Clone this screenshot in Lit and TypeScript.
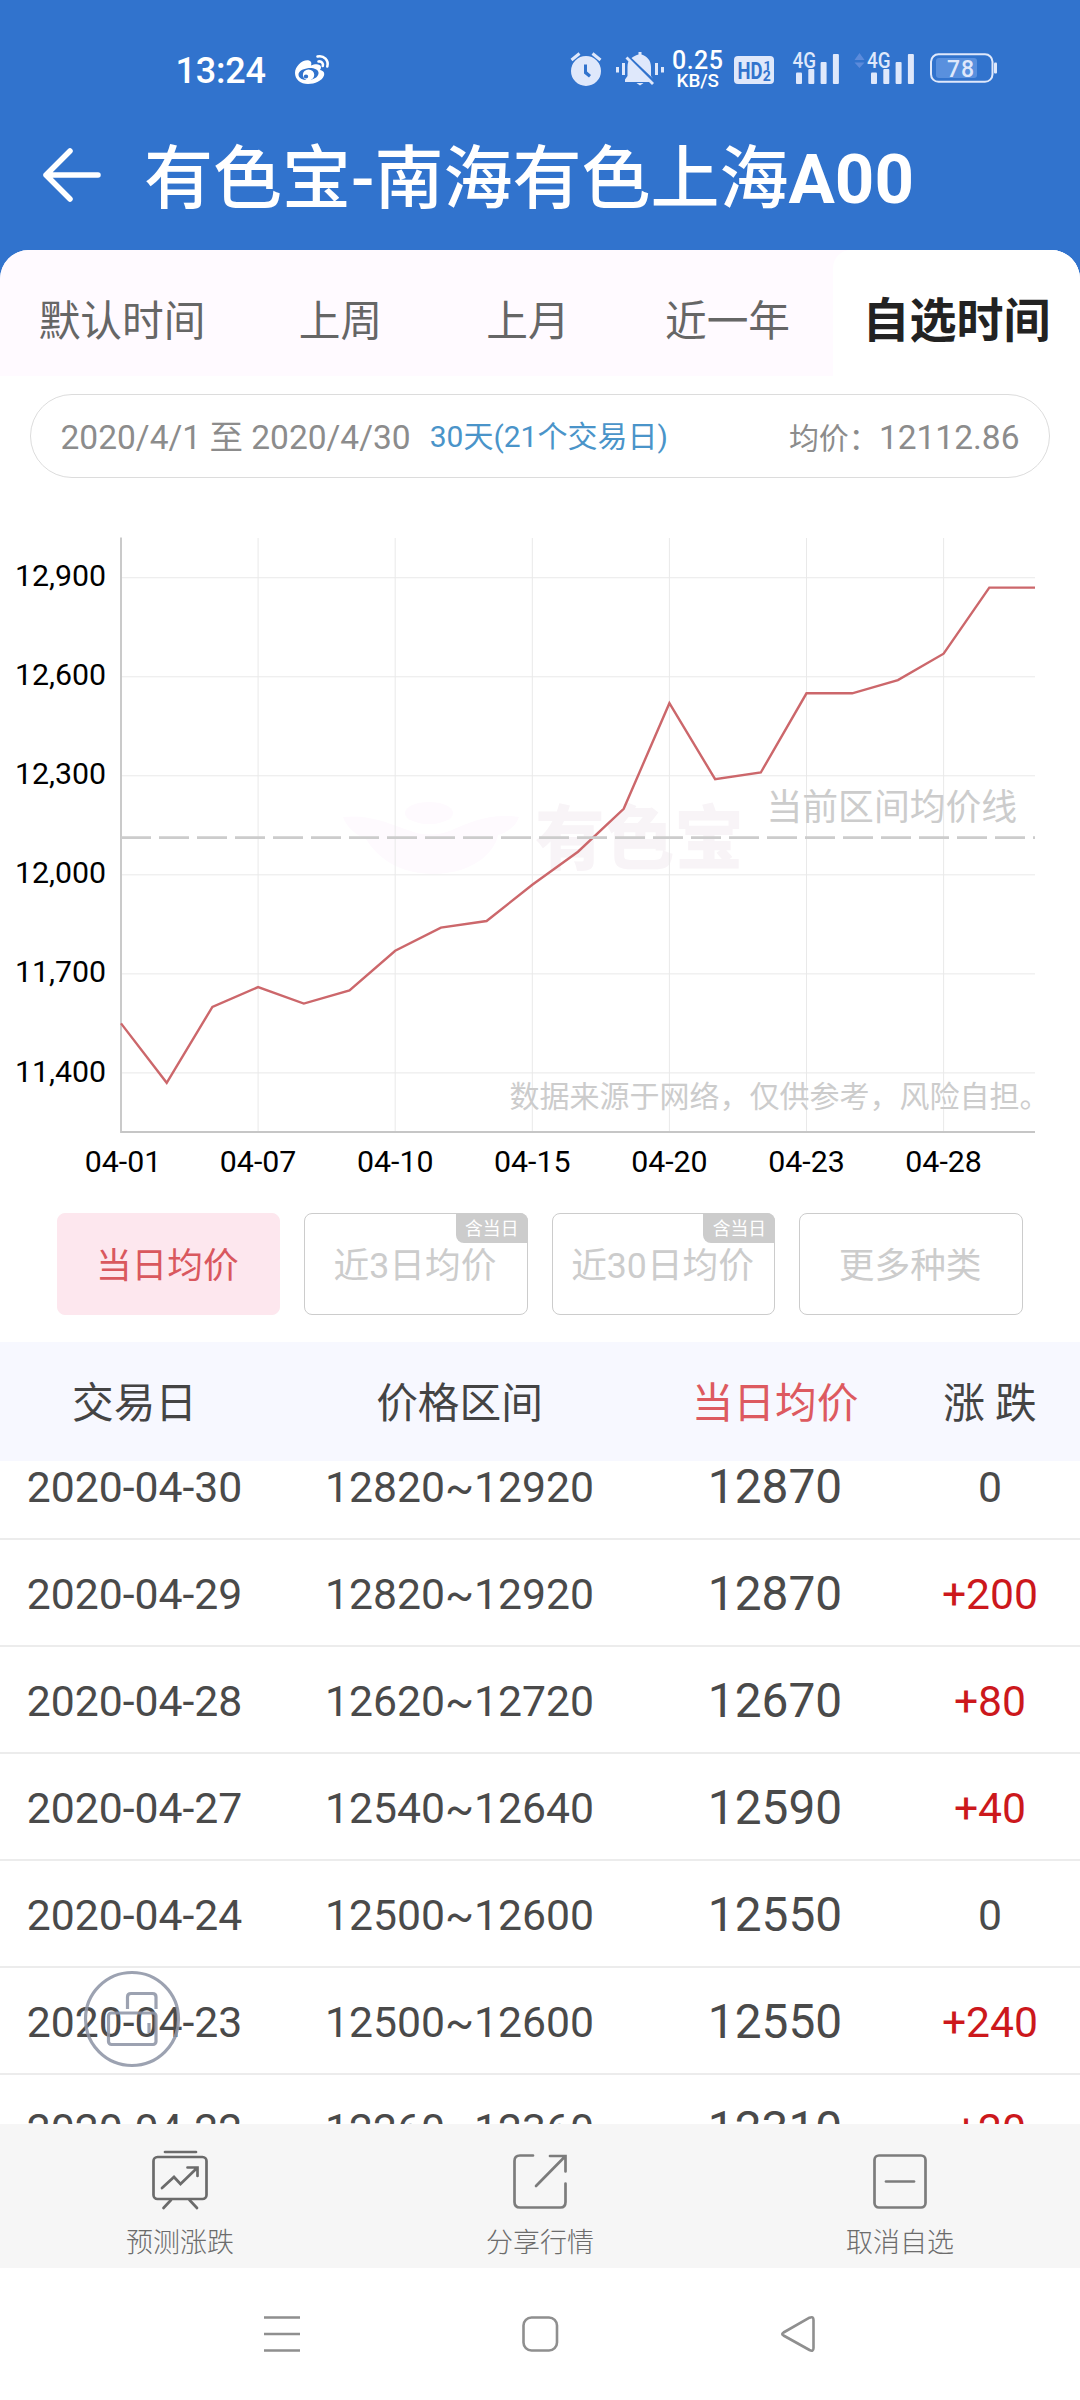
import { LitElement, html, svg, css } from "lit";
import { customElement } from "lit/decorators.js";
import { classMap } from "lit/directives/class-map.js";

const FONT = css`Roboto, "Noto Sans CJK SC", sans-serif`;

@customElement("status-bar")
class StatusBar extends LitElement {
  static styles = css`
    :host { display: flex; height: 100px; align-items: flex-start; color: #fff; font-family: ${FONT}; }
    svg { display: block; width: 1080px; height: 100px; }
    .time { font-size: 36px; font-weight: 500; }
    .tiny { font-weight: 500; }
    .hd { font-weight: 700; fill: #3173cd; }
    .soft { fill: #dfe8fb; }
    .line { fill: none; stroke: #dfe8fb; }
  `;
  bars(x: number) {
    return [72.5, 69, 62, 54].map((y, i) => svg`<rect class="soft" x=${x + i * 12.3} y=${y} width="6" height=${84 - y} rx="1"/>`);
  }
  render() {
    return html`<svg viewBox="0 0 1080 100" fill="#fff">
      <text class="time" x="175.500" y="82.500" textLength="90.500">13:24</text>
      <path fill-rule="evenodd" d="M295 73C295 66 303 59 309 60.500C312 61.500 311.500 64 311 65.500C315 63.500 320.500 63.500 321 67C321 68.500 320.500 69 320 70C323 70.500 325 72.500 324 75.500C322 81 315 84 308 84C300.500 84 295 79.500 295 73ZM298.500 74.500C298.500 78.500 303.500 80.500 309 80C315 79.500 319 76 318.500 72.500C318 69 313 67.500 307.500 68.200C302 69 298.500 71.500 298.500 74.500Z"/>
      <path fill-rule="evenodd" d="M308.500 69.500A5.700 5.400 0 1 0 308.600 80.300A5.700 5.400 0 1 0 308.500 69.500ZM306 74.500A2.200 2 0 1 1 306 78.500A2.200 2 0 1 1 306 74.500Z"/>
      <path fill="none" stroke="#fff" stroke-width="2.600" stroke-linecap="round" d="M317.500 56.500C324 55 329 60.500 327.300 66.500M318.500 61.500C321.500 61 323.600 63.300 322.800 66"/>

      <path class="soft" fill-rule="evenodd" d="M586 56A15 15 0 1 0 586 86A15 15 0 1 0 586 56ZM584 64.500H587V71.500L591 75L589 77.500L584 73.500Z"/>
      <path class="line" stroke-width="3" d="M571.500 60L579.500 53.500M600.500 60L592.500 53.500"/>

      <path class="soft" d="M625 82V79.500L627.500 76V67C627.500 63 628.500 61 630 59.500L650 82ZM631.500 58C634 56 636.500 55 638.500 54.500V52H641.500V54.500C647 56 651 60.500 651 67V76L653 78.500ZM636.500 83H643.500L640 85.500Z"/>
      <path class="line" stroke-width="2.800" d="M626.500 57.500L653 84"/>
      <path class="line" stroke-width="3" d="M617.500 67V72.500M623.500 63V75M656.500 63V75M662.500 67V72.500"/>

      <text class="tiny" font-size="25" x="672" y="68.500" textLength="51">0.25</text>
      <text class="tiny" font-size="18.500" x="676.500" y="87.300" textLength="42.500" lengthAdjust="spacingAndGlyphs">KB/S</text>

      <rect class="soft" x="734" y="56" width="40" height="28" rx="4"/>
      <text class="hd" font-size="23" x="737.500" y="78.500" textLength="25" lengthAdjust="spacingAndGlyphs">HD</text>
      <text class="hd" font-size="13.500" x="763.500" y="69.500">1</text>
      <text class="hd" font-size="14" x="762.800" y="81">2</text>

      <text class="tiny soft" font-size="22.500" x="792.500" y="68" textLength="23.500" lengthAdjust="spacingAndGlyphs">4G</text>
      ${this.bars(796)}
      <path fill="#5c8bdb" d="M854.500 60L859.500 53L864.500 60ZM854.500 62.500H864.500L859.500 68Z"/>
      <text class="tiny soft" font-size="22.500" x="867" y="68" textLength="23.500" lengthAdjust="spacingAndGlyphs">4G</text>
      ${this.bars(871)}

      <rect x="931" y="54.300" width="61.500" height="27.500" rx="7.500" fill="none" stroke="#dfe8fb" stroke-width="2"/>
      <rect x="936" y="58" width="41" height="20" rx="3" fill="#5990de"/>
      <rect class="soft" x="994" y="62.500" width="3" height="11" rx="1"/>
      <text class="tiny soft" font-size="23" x="947" y="76.500" textLength="27">78</text>
    </svg>`;
  }
}

@customElement("title-bar")
class TitleBar extends LitElement {
  static styles = css`
    :host { display: flex; align-items: center; height: 150px; box-sizing: border-box; padding: 9px 0 0 41px; gap: 41px; color: #fff; font-family: ${FONT}; }
    svg { width: 62px; height: 60px; margin-top: -9px; }
    h1 { margin: 0; font-size: 69px; line-height: 100px; font-weight: 500; white-space: nowrap; }
    .latin { font-weight: 700; }
  `;
  render() {
    return html`
      <svg viewBox="0 0 62 60" fill="none" stroke="#fff" stroke-width="5.500" stroke-linecap="round" stroke-linejoin="round"><path d="M29 6L5 30L29 54M5 30H57"/></svg>
      <h1>有色宝-南海有色上海<span class="latin">A00</span></h1>`;
  }
}

const TABS = ["默认时间", "上周", "上月", "近一年", "自选时间"];

@customElement("range-tabs")
class RangeTabs extends LitElement {
  static styles = css`
    :host { display: grid; grid-template-columns: 244px 193px 182px 214px 247px; height: 126px; background: linear-gradient(90deg, #fffaff 85%, #fff 85%); font-family: ${FONT}; }
    .tab { display: flex; align-items: center; justify-content: center; box-sizing: border-box; padding-top: 18px; height: 126px; font-size: 41.700px; line-height: 60px; color: #666; white-space: nowrap; }
    .tab:nth-child(4) { padding-left: 3px; }
    .on { background: #fff; border-top-left-radius: 18px; font-size: 47px; font-weight: 700; color: #222; padding-top: 16px; }
  `;
  render() {
    return TABS.map((t, i) => html`<div class=${classMap({ tab: true, on: i === 4 })}>${t}</div>`);
  }
}

@customElement("range-summary")
class RangeSummary extends LitElement {
  static styles = css`
    :host { display: flex; align-items: baseline; margin: 18px 30px 0; height: 84px; line-height: 85px; box-sizing: border-box; border: 1px solid #dcdcdc; border-radius: 42px; padding: 0 29.500px; font-family: ${FONT}; font-size: 33.500px; color: #8c8c8c; white-space: nowrap; }
    .days { margin-left: 19px; font-size: 30px; color: #4a94c9; position: relative; top: -2px; }
    .avg { margin-left: auto; }
    .label { font-size: 30px; }
  `;
  render() {
    return html`<span>2020/4/1 至 2020/4/30</span><span class="days">30天(21个交易日)</span>
      <span class="avg"><span class="label">均价：</span>12112.86</span>`;
  }
}

const PRICES = [11550, 11370, 11600, 11660, 11610, 11650, 11770, 11840, 11860, 11970, 12070, 12200, 12520, 12290, 12310, 12550, 12550, 12590, 12670, 12870, 12870];
const X_LABELS = ["04-01", "04-07", "04-10", "04-15", "04-20", "04-23", "04-28"];
const Y_LABELS = [12900, 12600, 12300, 12000, 11700, 11400];
const AVERAGE = 12112.86;
const px = (i: number) => 121 + i * 45.7;
const py = (v: number) => 582.9 - (v - 11400) * 0.3301;

@customElement("price-chart")
class PriceChart extends LitElement {
  static styles = css`
    :host { display: block; height: 710px; margin-top: 12px; font-family: ${FONT}; }
    svg { display: block; width: 1080px; height: 710px; }
    .axis { font-size: 30.300px; fill: #000; }
    .grid { stroke: #e9e9e9; stroke-width: 1; }
    .mark { font-size: 70px; font-weight: 900; fill: #f8f4f7; }
    .note { fill: #ccc; }
  `;
  render() {
    return html`<svg viewBox="0 0 1080 710">
      <g fill="#fefafe">
        <ellipse cx="429" cy="323" rx="24" ry="11"/>
        <path d="M343 327C370 324 390 334 408 340C422 346 438 346 452 340C470 332 490 323 519 327C516 336 508 342 498 345C496 358 478 384 432 384C392 383 374 362 366 349C354 344 346 336 343 327Z"/>
      </g>
      <text class="mark" x="535" y="374" textLength="209" lengthAdjust="spacingAndGlyphs">有色宝</text>
      ${Y_LABELS.map((v) => svg`<line class="grid" x1="121" x2="1035" y1=${py(v)} y2=${py(v)}/>
        <text class="axis" x="106" y=${py(v) + 8.6} text-anchor="end">${v.toLocaleString("en-US")}</text>`)}
      ${X_LABELS.map((t, i) => svg`<line class="grid" x1=${px(i * 3)} x2=${px(i * 3)} y1="48" y2="642"/>
        <text class="axis" x=${px(i * 3) + (i ? 0 : 2)} y="682" text-anchor="middle">${t}</text>`)}
      <path d="M121 47.500V642H1035" fill="none" stroke="#c6c6c6" stroke-width="1.800"/>
      <polyline fill="none" stroke="#cc676b" stroke-width="2.400" points=${PRICES.map((v, i) => `${px(i)},${py(v)}`).join(" ")}/>
      <line x1="121" x2="1035" y1=${py(AVERAGE)} y2=${py(AVERAGE)} stroke="#ccc" stroke-width="2.800" stroke-dasharray="30 8"/>
      <text class="note" font-size="35.800" x="766.500" y="330">当前区间均价线</text>
      <text class="note" font-size="30" x="509.500" y="616.500">数据来源于网络，仅供参考，风险自担。</text>
    </svg>`;
  }
}

const KINDS = [
  { t: "当日均价", on: true },
  { t: "近3日均价", badge: true },
  { t: "近30日均价", badge: true },
  { t: "更多种类" },
];

@customElement("kind-picker")
class KindPicker extends LitElement {
  static styles = css`
    :host { display: grid; grid-template-columns: repeat(4, 1fr); gap: 24px; padding: 13px 57px 27px 56.500px; font-family: ${FONT}; }
    .kind { position: relative; display: flex; align-items: center; justify-content: center; height: 102px; box-sizing: border-box; border: 1px solid #ccc; border-radius: 8px; font-size: 35.700px; line-height: 50px; color: #ccc; white-space: nowrap; padding: 4px 2px 0 0; }
    .on { background: #fde7ee; border-color: #fde7ee; color: #d9585e; }
    .badge { position: absolute; top: -1px; right: -1px; width: 72px; height: 30px; border-radius: 0 8px 0 8px; background: #ccc; color: #fff; font-size: 17.800px; line-height: 31px; text-align: center; }
  `;
  render() {
    return KINDS.map((k) => html`<div class=${classMap({ kind: true, on: !!k.on })}>${k.t}${k.badge ? html`<span class="badge">含当日</span>` : ""}</div>`);
  }
}

const ROWS = [
  ["2020-04-30", "12820~12920", "12870", "0"],
  ["2020-04-29", "12820~12920", "12870", "+200"],
  ["2020-04-28", "12620~12720", "12670", "+80"],
  ["2020-04-27", "12540~12640", "12590", "+40"],
  ["2020-04-24", "12500~12600", "12550", "0"],
  ["2020-04-23", "12500~12600", "12550", "+240"],
  ["2020-04-22", "12260~12360", "12310", "+20"],
];

@customElement("price-table")
class PriceTable extends LitElement {
  static styles = css`
    :host { display: block; font-family: ${FONT}; color: #4a4a4a; }
    .row { display: grid; grid-template-columns: 269px 381px 250px 180px; align-items: center; text-align: center; height: 107px; box-sizing: border-box; border-bottom: 2px solid #ececec; padding-top: 2px; font-size: 42.700px; line-height: 60px; white-space: nowrap; }
    .head { height: 119px; background: #f7f8ff; border: 0; font-size: 41.700px; padding-top: 5px; padding-bottom: 1px; color: #444; }
    .head .now { color: #dd5a60; font-size: inherit; }
    .gap { margin-left: 10px; }
    .body { height: 663px; overflow: hidden; }
    .list { margin-top: -28px; }
    .now { font-size: 47.800px; }
    .up { color: #cc181c; }
  `;
  render() {
    return html`
      <div class="row head"><span>交易日</span><span>价格区间</span><span class="now">当日均价</span><span>涨<span class="gap">跌</span></span></div>
      <div class="body"><div class="list">
        ${ROWS.map(([d, r, p, c]) => html`<div class="row"><span>${d}</span><span>${r}</span><span class="now">${p}</span><span class=${classMap({ up: c !== "0" })}>${c}</span></div>`)}
      </div></div>`;
  }
}

const ACTIONS = [
  { t: "预测涨跌", c: "#6b6b6b", d: svg`<path d="M20 4H51"/><rect x="8.500" y="9" width="53" height="42" rx="4"/><path d="M17 40L29 29L35.500 36L52 20M42.500 19.500H52.500V28M26 52L18.500 60M44.500 52L52 60"/>` },
  { t: "分享行情", c: "#7c7c7c", d: svg`<path d="M28 7.500H15Q9.500 7.500 9.500 13V54Q9.500 59.500 15 59.500H55.500Q60.500 59.500 60.500 54V35.500M31 38L60 8.500M45 8H60.500V23.500"/>` },
  { t: "取消自选", c: "#7c7c7c", d: svg`<rect x="9.500" y="7.500" width="51" height="52" rx="4.500"/><path d="M21 33.500H49"/>` },
];

@customElement("action-bar")
class ActionBar extends LitElement {
  static styles = css`
    :host { display: grid; grid-template-columns: repeat(3, 1fr); height: 144px; background: #f6f6f6; font-family: ${FONT}; font-size: 27px; color: #6c6c6c; }
    .item { display: flex; flex-direction: column; align-items: center; padding-top: 24px; line-height: 36px; font-weight: 300; }
    svg { width: 70px; height: 64px; margin-bottom: 13px; }
  `;
  render() {
    return ACTIONS.map((a) => html`<div class="item"><svg viewBox="0 0 70 64" fill="none" stroke=${a.c} stroke-width="2.700" stroke-linecap="round">${a.d}</svg>${a.t}</div>`);
  }
}

@customElement("system-nav")
class SystemNav extends LitElement {
  static styles = css`
    :host { display: flex; justify-content: center; align-items: center; gap: 218px; height: 132px; }
    svg { width: 40px; height: 40px; }
  `;
  render() {
    const icon = (d: unknown) => html`<svg viewBox="0 0 40 40" fill="none" stroke="#8f8f8f" stroke-width="2.600" stroke-linejoin="round">${d}</svg>`;
    return html`
      ${icon(svg`<path d="M2 3.500H38M2 20H38M2 36.500H38"/>`)}
      ${icon(svg`<rect x="3.500" y="3.500" width="33.500" height="33" rx="8"/>`)}
      ${icon(svg`<path d="M5.500 18.500L31.500 3.700Q35.500 2 35.500 6V34Q35.500 38 31.500 36L5.500 21.500Q3 20 5.500 18.500Z"/>`)}`;
  }
}

@customElement("app-root")
class AppRoot extends LitElement {
  static styles = css`
    :host { display: block; position: relative; width: 1080px; height: 2400px; overflow: hidden; background: #3173cd; }
    .panel { border-radius: 29px 29px 0 0; overflow: hidden; background: #fff; height: 2150px; }
    .float { position: absolute; left: 82px; top: 1969px; width: 100px; height: 100px; }
  `;
  render() {
    return html`
      <status-bar></status-bar>
      <title-bar></title-bar>
      <div class="panel">
        <range-tabs></range-tabs>
        <range-summary></range-summary>
        <price-chart></price-chart>
        <kind-picker></kind-picker>
        <price-table></price-table>
        <action-bar></action-bar>
        <system-nav></system-nav>
      </div>
      <svg class="float" viewBox="0 0 100 100" fill="none" stroke="#8e95a6" stroke-opacity=".88" stroke-width="3.200">
        <circle cx="50" cy="50" r="46.500"/>
        <path d="M45.500 40V28Q45.500 24.500 49 24.500H70.500Q74 24.500 74 28V40"/>
        <rect x="26.500" y="44" width="47.500" height="31.500" rx="3"/>
        <path d="M67 54V64"/>
      </svg>`;
  }
}
